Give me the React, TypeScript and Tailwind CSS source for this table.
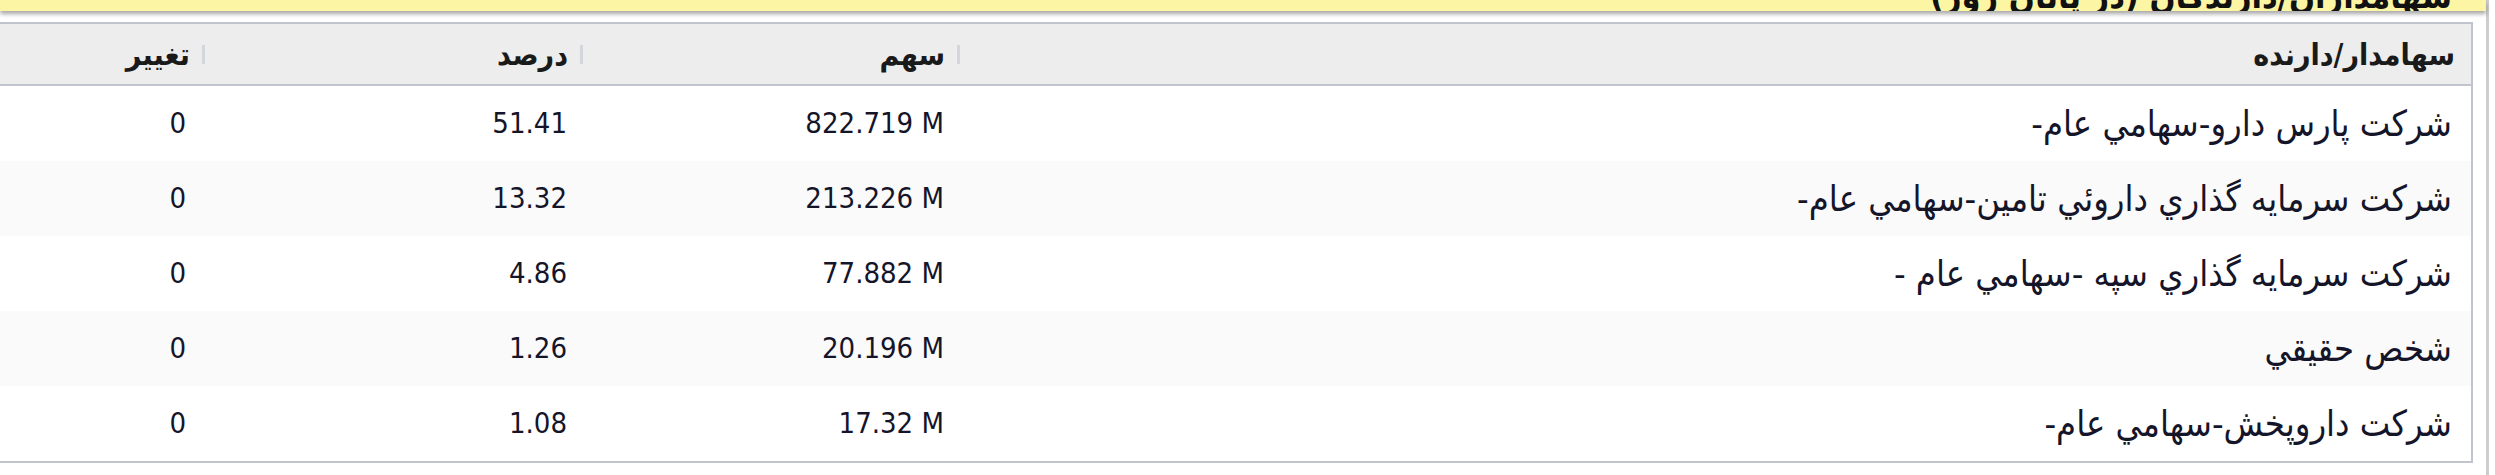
const rows = [
  { name: 'شرکت پارس دارو-سهامي عام-', share: '822.719 M', pct: '51.41', change: '0' },
  { name: 'شرکت سرمايه گذاري داروئي تامين-سهامي عام-', share: '213.226 M', pct: '13.32', change: '0' },
  { name: 'شرکت سرمايه گذاري سپه -سهامي عام -', share: '77.882 M', pct: '4.86', change: '0' },
  { name: 'شخص حقيقي', share: '20.196 M', pct: '1.26', change: '0' },
  { name: 'شرکت داروپخش-سهامي عام-', share: '17.32 M', pct: '1.08', change: '0' },
];

function HeadCell({ label }: { label: string }) {
  return (
    <div className="flex items-center pr-[1px]">
      <span className="w-[3px] h-[19px] bg-[#d3d6dc]"></span>
      <span className="mr-[12px]">{label}</span>
    </div>
  );
}

export default function App() {
  return (
    <div className="w-[2495px] h-[475px] bg-white overflow-hidden font-['DejaVu_Sans_Condensed','DejaVu_Sans',sans-serif] font-stretch-condensed text-[#15152a]">
      <div dir="rtl" className="w-[2489px] h-full border-r-[3px] border-[#cdcdcd] flex flex-col">
        <div className="h-[11px] bg-[#fcf6a4] shadow-[0_3px_4px_rgba(0,0,0,0.35)] overflow-hidden flex items-end pr-[34px] relative z-10">
          <h2 className="text-[34px] font-bold leading-[34px] mb-[-2px] text-[#111] whitespace-nowrap">
            سهامداران/دارندگان (در پايان روز)
          </h2>
        </div>

        <div className="mt-[11px] mr-[13px] border-y-2 border-r-2 border-[#c0c4cc]">
          <div className="grid grid-cols-[1510px_377px_378px_206px] h-[62px] items-center bg-[#ededed] border-b-2 border-[#c0c4cc] text-[30px] font-bold text-[#1a1a1a]">
            <div className="pr-[16px]">سهامدار/دارنده</div>
            <HeadCell label="سهم" />
            <HeadCell label="درصد" />
            <HeadCell label="تغيير" />
          </div>

          {rows.map((r, i) => (
            <div
              key={r.name}
              className={`grid grid-cols-[1510px_377px_378px_206px] h-[75px] items-center text-[29px] ${i % 2 === 1 ? 'bg-[#fafafa]' : 'bg-white'}`}
            >
              <div className="pr-[19px] whitespace-nowrap text-[36px]">{r.name}</div>
              <div className="pr-[17px]" dir="ltr">
                <div className="text-right">{r.share}</div>
              </div>
              <div className="pr-[17px]" dir="ltr">
                <div className="text-right">{r.pct}</div>
              </div>
              <div className="pr-[20px]" dir="ltr">
                <div className="text-right">{r.change}</div>
              </div>
            </div>
          ))}
        </div>
      </div>
    </div>
  );
}
